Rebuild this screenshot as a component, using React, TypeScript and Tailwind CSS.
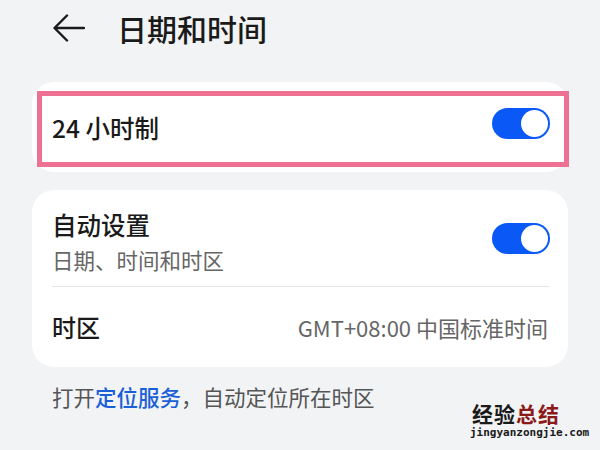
import React from 'react';

const Toggle: React.FC = () => (
  <div className="w-[58px] h-[31px] rounded-full bg-[#0a59f7] flex items-center justify-end pr-[2px]">
    <div className="w-[27px] h-[27px] rounded-full bg-white" />
  </div>
);

const App: React.FC = () => {
  return (
    <div
      className="relative w-[600px] h-[450px] overflow-hidden bg-[#f1f3f5] text-[#1a1a1a]"
      style={{ fontFamily: '"Noto Sans CJK SC", "Noto Sans", sans-serif' }}
    >
      {/* header */}
      <div className="h-[82px] flex items-start pt-[9px]">
        <div className="flex items-center h-[38px]">
          <svg className="ml-[53px]" width="32" height="28" viewBox="0 0 32 28" fill="none">
            <path d="M31 14H2M14 1.5L1.5 14L14 26.5" stroke="#1a1a1a" strokeWidth="2.4" strokeLinecap="round" strokeLinejoin="round" />
          </svg>
          <h1 className="ml-[32px] text-[30px] font-medium leading-none">日期和时间</h1>
        </div>
      </div>

      <div className="px-8">
        {/* 24 hour card */}
        <div className="relative h-[90px] rounded-[22px] bg-white flex items-center justify-between pl-5 pr-[18px]">
          <span className="text-[24.5px] font-medium leading-none pt-[2px]">24 小时制</span>
          <div className="mt-[-8px]">
            <Toggle />
          </div>
          <div className="absolute left-[5px] top-[9px] right-[-1px] bottom-[5px] border-[5px] border-[#ee7193]" />
        </div>

        {/* auto set card */}
        <div className="mt-[18px] h-[177px] rounded-[22px] bg-white pl-5 pr-[18px]">
          <div className="h-[97px] flex items-center justify-between border-b border-[#e6e6e6]">
            <div className="flex flex-col pt-[7px]">
              <span className="text-[24.5px] font-medium leading-none">自动设置</span>
              <span className="mt-[12px] text-[21.5px] leading-none text-[#666]">日期、时间和时区</span>
            </div>
            <Toggle />
          </div>
          <div className="h-[79px] flex items-center justify-between">
            <span className="text-[24px] font-medium leading-none">时区</span>
            <span className="text-[22px] leading-none text-[#666] pr-[2px]">GMT+08:00 中国标准时间</span>
          </div>
        </div>

        <p className="mt-[19px] pl-5 text-[21.5px] leading-none text-[#555]">
          打开<span className="text-[#1a5fd6] font-medium">定位服务</span>，自动定位所在时区
        </p>

        <div className="mt-[43px] h-[40px] rounded-t-[22px] bg-white" />
      </div>

      {/* watermark */}
      <div className="absolute left-[470px] top-[402px] flex flex-col items-start">
        <div className="ml-[2px] text-[21px] font-bold leading-[22px] tracking-[1px]">
          <span className="text-[#1a1a1a]">经验</span>
          <span className="text-[#8b1a1a]">总结</span>
        </div>
        <span
          className="mt-[3px] text-[11px] font-bold leading-[12px] text-[#1a1a1a]"
          style={{ fontFamily: '"DejaVu Sans Mono", monospace' }}
        >
          jingyanzongjie.com
        </span>
      </div>
    </div>
  );
};

export default App;
